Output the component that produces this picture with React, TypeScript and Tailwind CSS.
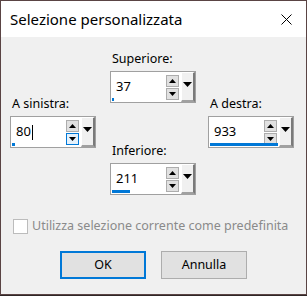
import React from "react";

const FONT = { fontFamily: '"Noto Sans", "Segoe UI", Arial, sans-serif' };

function UpTri() {
  return (
    <svg width="7" height="4" viewBox="0 0 7 4">
      <path d="M3.5 0 L7 4 L0 4 Z" fill="#000" />
    </svg>
  );
}

function DownTri({ w = 7, h = 4 }: { w?: number; h?: number }) {
  return (
    <svg width={w} height={h} viewBox={`0 0 ${w} ${h}`}>
      <path d={`M0 0 L${w} 0 L${w / 2} ${h} Z`} fill="#000" />
    </svg>
  );
}

type SpinProps = {
  label: string;
  value: string;
  bar: number;
  downHover?: boolean;
  cursor?: boolean;
};

function Spinner({ label, value, bar, downHover, cursor }: SpinProps) {
  return (
    <div className="flex flex-col">
      <div className="h-[16px] leading-[16px] text-[12.5px] text-black mb-[4px] pl-[2px]">{label}</div>
      <div className="relative flex h-[32px] w-[86px] border border-[#a0a0a0] bg-white">
        <div className="flex flex-1 items-center pl-[5px] text-[13px] text-black">
          {value}
          {cursor && <span className="ml-[1px] h-[15px] w-[1px] bg-black" />}
        </div>
        <div className="flex flex-col justify-center gap-[1px] mr-[2px]">
          <div className="flex h-[12px] w-[13px] items-center justify-center border border-[#adadad] bg-[#e1e1e1]">
            <UpTri />
          </div>
          <div
            className={
              downHover
                ? "flex h-[12px] w-[13px] items-center justify-center border border-[#0078d7] bg-[#e5f1fb]"
                : "flex h-[12px] w-[13px] items-center justify-center border border-[#adadad] bg-[#e1e1e1]"
            }
          >
            <DownTri w={7} h={4} />
          </div>
        </div>
        <div className="flex h-[30px] w-[14px] justify-center pt-[9px] bg-[#f0f0f0] border-t border-l border-t-white border-l-white border-r-2 border-b-2 border-r-[#7a7a7a] border-b-[#a0a0a0]">
          <DownTri w={9} h={5} />
        </div>
        <div
          className="absolute bottom-[1px] left-[1px] h-[3px] bg-[#0078d7]"
          style={{ width: bar }}
        />
      </div>
    </div>
  );
}

export default function App() {
  return (
    <div className="w-[307px] h-[296px] bg-[#2f2626]" style={FONT}>
      <div className="w-[307px] h-[295px] border border-[#5a4444] bg-[#f0f0f0] flex flex-col">
        {/* title bar */}
        <div className="h-[36px] bg-white flex items-center justify-between pl-[9px] pr-[14px]">
          <span className="text-[15px] text-black">Selezione personalizzata</span>
          <svg width="11" height="11" viewBox="0 0 11 11">
            <path d="M0.5 0.5 L10.5 10.5 M10.5 0.5 L0.5 10.5" stroke="#000" strokeWidth="1" />
          </svg>
        </div>

        {/* spinners */}
        <div className="flex pl-[9px]">
          <div className="pt-[59px]">
            <Spinner label="A sinistra:" value="80" bar={3} downHover cursor />
          </div>
          <div className="ml-[14px] pt-[14px] flex flex-col gap-[40px]">
            <Spinner label="Superiore:" value="37" bar={2} />
            <Spinner label="Inferiore:" value="211" bar={18} />
          </div>
          <div className="ml-[12px] pt-[59px]">
            <Spinner label="A destra:" value="933" bar={68} />
          </div>
        </div>

        {/* checkbox */}
        <div className="mt-[23px] flex items-center pl-[12px] gap-[4px]">
          <div className="h-[15px] w-[15px] border border-[#bcbcbc] bg-white" />
          <span className="text-[12.5px] leading-[16px] text-[#8a8a8a]">
            Utilizza selezione corrente come predefinita
          </span>
        </div>

        {/* buttons */}
        <div className="mt-[17px] flex pl-[59px] gap-[15px]">
          <button className="h-[28px] w-[86px] border-2 border-[#0078d7] bg-[#e1e1e1] text-[12.5px] text-black">
            OK
          </button>
          <button className="h-[28px] w-[86px] border border-[#adadad] bg-[#e1e1e1] text-[12.5px] text-black">
            Annulla
          </button>
        </div>
      </div>
    </div>
  );
}
